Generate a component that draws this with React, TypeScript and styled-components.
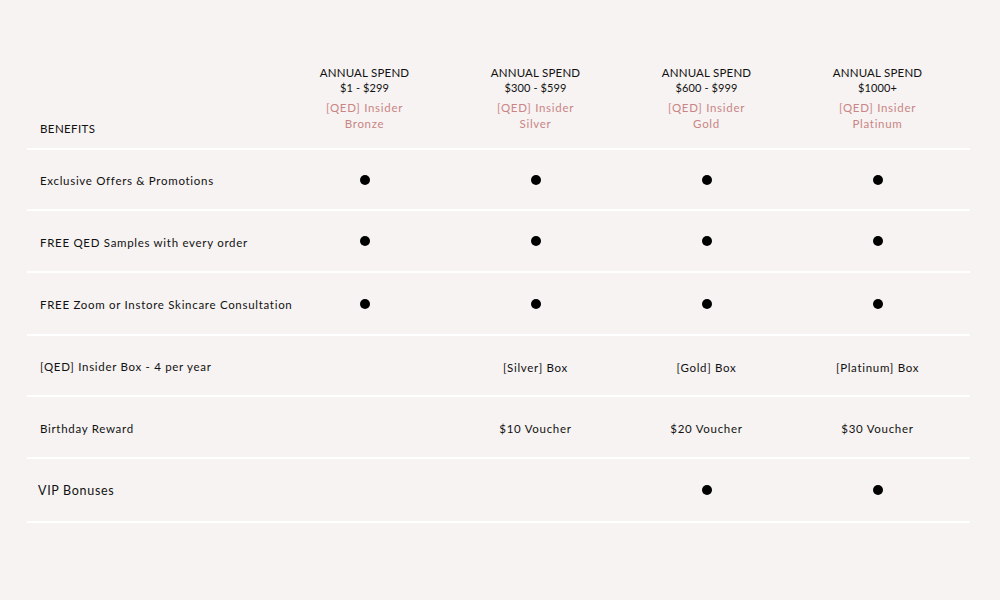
import React from 'react';
import styled, { createGlobalStyle } from 'styled-components';

const GlobalStyle = createGlobalStyle`
  html, body {
    margin: 0;
    padding: 0;
    background: #f7f3f2;
  }
  body {
    font-family: Lato, "Open Sans", "Liberation Sans", sans-serif;
    color: #111111;
  }
`;

const TIERS = [
  { range: '$1 - $299', name: 'Bronze' },
  { range: '$300 - $599', name: 'Silver' },
  { range: '$600 - $999', name: 'Gold' },
  { range: '$1000+', name: 'Platinum' },
];

// true = dot, string = text, null = empty
type Cell = true | string | null;

const ROWS: { label: string; height: number; big?: boolean; cells: Cell[] }[] = [
  { label: 'Exclusive Offers & Promotions', height: 59, cells: [true, true, true, true] },
  { label: 'FREE QED Samples with every order', height: 60, cells: [true, true, true, true] },
  { label: 'FREE Zoom or Instore Skincare Consultation', height: 61, cells: [true, true, true, true] },
  { label: '[QED] Insider Box - 4 per year', height: 59, cells: [null, '[Silver] Box', '[Gold] Box', '[Platinum] Box'] },
  { label: 'Birthday Reward', height: 60, cells: [null, '$10 Voucher', '$20 Voucher', '$30 Voucher'] },
  { label: 'VIP Bonuses', height: 62, big: true, cells: [null, null, true, true] },
];

const Page = styled.div`
  width: 1000px;
  height: 600px;
  padding-top: 65px;
  box-sizing: border-box;
  background: #f7f3f2;
`;

const Table = styled.div`
  margin-left: 27px;
  width: 943px;
`;

const Row = styled.div<{ $height?: number }>`
  display: grid;
  grid-template-columns: 252px repeat(4, 171px) 1fr;
  align-items: center;
  height: ${p => (p.$height ? `${p.$height}px` : 'auto')};
  border-bottom: 2px solid #ffffff;
`;

const HeaderRow = styled(Row)`
  align-items: end;
  padding-bottom: 16px;
`;

const BenefitsTitle = styled.div`
  padding-left: 13px;
  margin-bottom: -4px;
  font-size: 11.5px;
  line-height: 15px;
  letter-spacing: 0.4px;
  text-transform: uppercase;
`;

const TierHead = styled.div`
  display: flex;
  flex-direction: column;
  align-items: center;
  text-align: center;
`;

const Spend = styled.div`
  font-size: 11.5px;
  line-height: 15px;
  letter-spacing: 0.2px;
`;

const Range = styled.div`
  font-size: 11px;
  line-height: 15px;
  letter-spacing: 0.1px;
`;

const TierName = styled.div`
  margin-top: 5px;
  color: #c98585;
  font-size: 11.5px;
  line-height: 16px;
  letter-spacing: 0.7px;
`;

const Label = styled.div<{ $big?: boolean }>`
  padding-left: ${p => (p.$big ? '11px' : '13px')};
  white-space: nowrap;
  font-size: ${p => (p.$big ? '12.5px' : '11.5px')};
  letter-spacing: 0.7px;
  padding-top: ${p => (p.$big ? '0' : '2px')};
`;

const Value = styled.div`
  display: flex;
  justify-content: center;
  font-size: 11.5px;
  letter-spacing: 0.7px;
  padding-top: 3px;
`;

const Dot = styled.span`
  width: 10px;
  height: 10px;
  margin-top: -3px;
  border-radius: 50%;
  background: #000000;
`;

export default function App() {
  return (
    <Page>
      <GlobalStyle />
      <Table>
        <HeaderRow>
          <BenefitsTitle>Benefits</BenefitsTitle>
          {TIERS.map(t => (
            <TierHead key={t.name}>
              <Spend>ANNUAL SPEND</Spend>
              <Range>{t.range}</Range>
              <TierName>
                [QED] Insider
                <br />
                {t.name}
              </TierName>
            </TierHead>
          ))}
          <div />
        </HeaderRow>
        {ROWS.map(r => (
          <Row key={r.label} $height={r.height}>
            <Label $big={r.big}>{r.label}</Label>
            {r.cells.map((c, i) => (
              <Value key={i}>{c === true ? <Dot /> : c}</Value>
            ))}
            <div />
          </Row>
        ))}
      </Table>
    </Page>
  );
}
